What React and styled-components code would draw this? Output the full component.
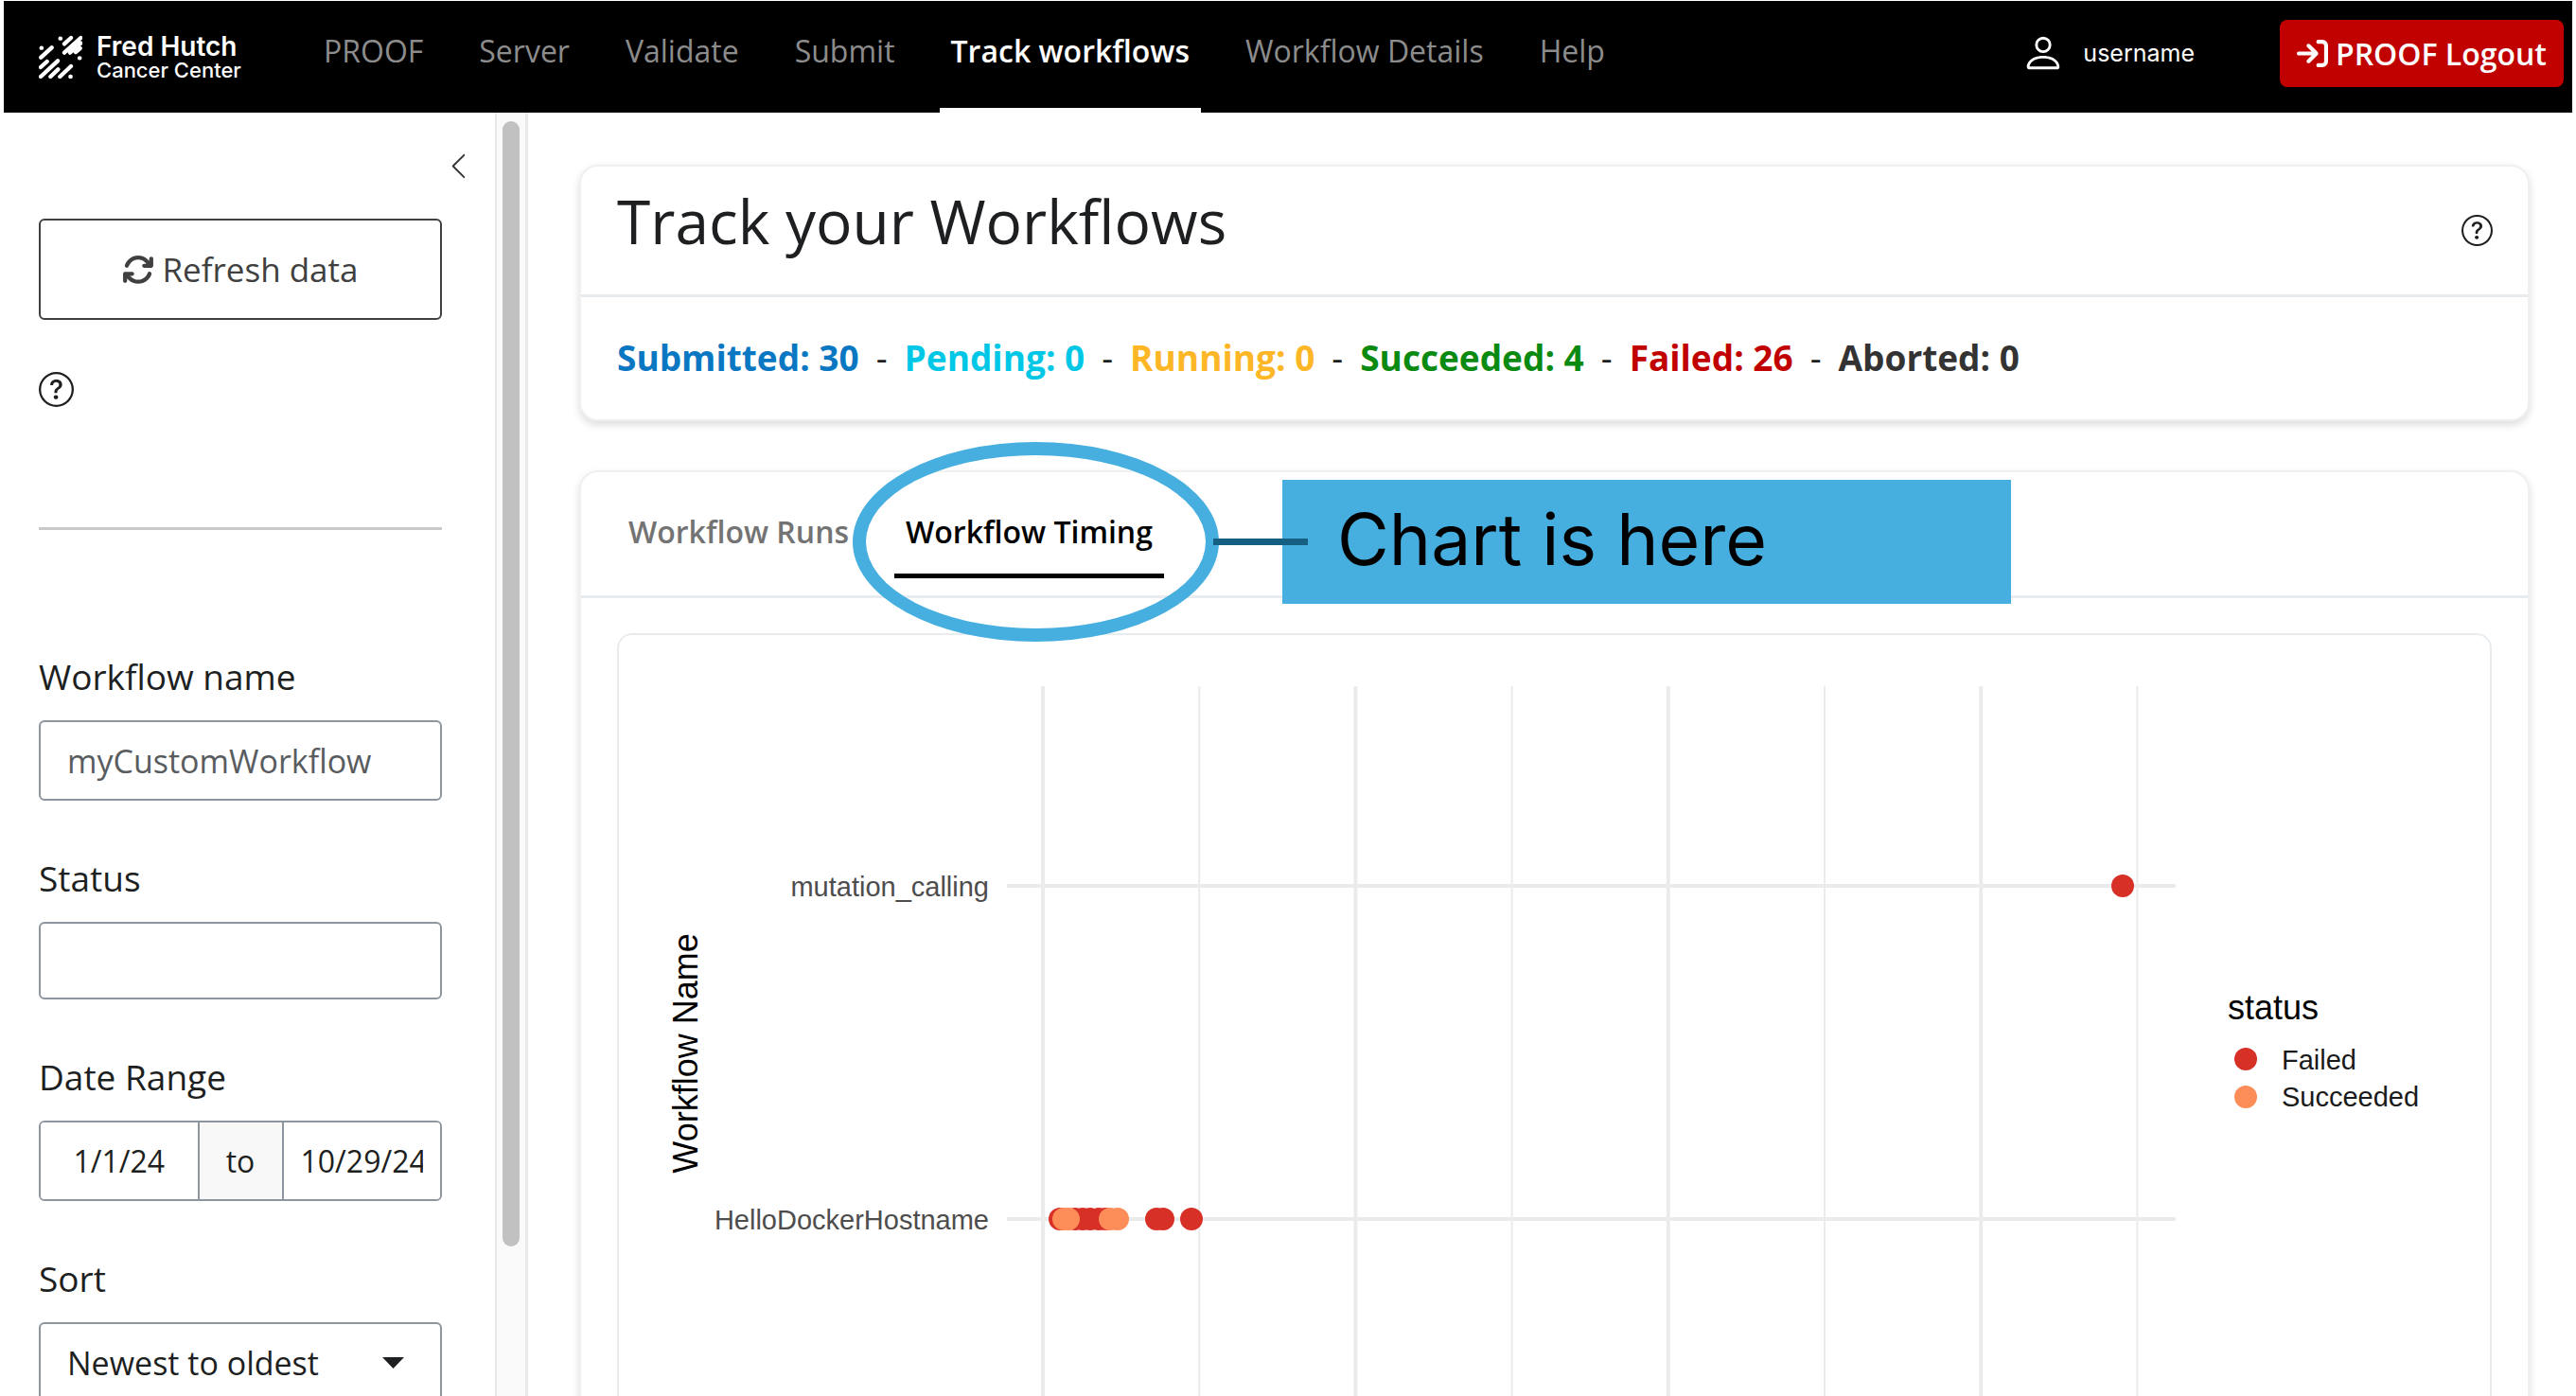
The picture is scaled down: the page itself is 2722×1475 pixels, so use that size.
import React from "react";
import styled, { createGlobalStyle, css } from "styled-components";
import { FaArrowRightToBracket, FaArrowsRotate } from "react-icons/fa6";
import { BsPerson, BsQuestionCircle, BsChevronLeft } from "react-icons/bs";

const sans = `"Open Sans", "Noto Sans", sans-serif`;
const display = `Inter, "Liberation Sans", sans-serif`;

const GlobalStyle = createGlobalStyle`
  *, *::before, *::after { box-sizing: border-box; }
  body {
    margin: 0;
    background: #fff;
    color: #1d1f21;
    font-family: ${sans};
  }
  button, input, select { font-family: inherit; margin: 0; }
`;

const Page = styled.div`
  display: flex;
  flex-direction: column;
  height: 100vh;
  padding: 1px 4px 0;
  overflow: hidden;
`;

const Navbar = styled.header`
  display: flex;
  flex: none;
  height: 118px;
  padding: 0 9px 0 37px;
  background: #000;
  color: #fff;
`;

const Brand = styled.a`
  display: flex;
  align-items: center;
  gap: 15px;
  width: 289px;
  color: #fff;
  text-decoration: none;
`;

const BrandText = styled.span`
  display: flex;
  flex-direction: column;
  font-family: ${display};
`;

const BrandName = styled.span`
  font-size: 28px;
  font-weight: 600;
  line-height: 27px;
`;

const BrandSub = styled.span`
  font-size: 22px;
  font-weight: 500;
  line-height: 22px;
`;

const NavLinks = styled.nav`
  display: flex;
  gap: 35px;
`;

const NavLink = styled.a`
  height: 118px;
  padding: 0 12px;
  border-bottom: 5px solid ${(p) => (p.$active ? "#fff" : "transparent")};
  color: ${(p) => (p.$active ? "#fff" : "#8c8c8c")};
  font-size: 32px;
  font-weight: ${(p) => (p.$active ? 600 : 400)};
  line-height: 106px;
  text-decoration: none;
  white-space: nowrap;
`;

const Account = styled.div`
  display: flex;
  align-items: center;
  height: 110px;
  margin-left: auto;
`;

const UserName = styled.span`
  margin: 0 90px 0 19px;
  font-family: ${display};
  font-size: 25px;
`;

const LogoutButton = styled.button`
  display: flex;
  align-items: center;
  justify-content: center;
  gap: 8px;
  height: 71px;
  padding: 0 18px;
  border: 0;
  border-radius: 8px;
  background: #c10000;
  color: #fff;
  font-size: 32px;
  font-weight: 600;
  white-space: nowrap;
`;

const Body = styled.div`
  display: flex;
  flex: 1;
  min-height: 0;
`;

const Sidebar = styled.aside`
  display: flex;
  flex: none;
  flex-direction: column;
  width: 519px;
  padding: 37px 56px 0 37px;
  overflow: hidden;
`;

const CollapseButton = styled.button`
  display: flex;
  align-self: flex-end;
  width: 40px;
  height: 40px;
  margin: 0 -38px 36px 0;
  padding: 4px;
  border: 0;
  background: none;
  color: #333;
`;

const RefreshButton = styled.button`
  display: flex;
  flex: none;
  align-items: center;
  justify-content: center;
  gap: 8px;
  height: 107px;
  border: 2px solid #404040;
  border-radius: 6px;
  background: #fff;
  color: #404040;
  font-size: 35px;
  font-weight: 500;
`;

const HelpButton = styled.button`
  display: flex;
  flex: none;
  align-self: ${(p) => (p.$inline ? "center" : "flex-start")};
  padding: 0;
  border: 0;
  background: none;
  color: #1d1f21;
`;

const HelpRow = styled.div`
  display: flex;
  padding: 55px 0 127px;
`;

const Divider = styled.hr`
  flex: none;
  width: 100%;
  height: 3px;
  margin: 0 0 127px;
  border: 0;
  background: #c9c9c9;
`;

const Field = styled.div`
  display: flex;
  flex: none;
  flex-direction: column;
  gap: 18px;
  margin-bottom: 54px;
`;

const FieldLabel = styled.label`
  font-size: 37px;
  line-height: 56px;
`;

const controlFrame = css`
  height: 85px;
  border: 2px solid #8d959e;
  border-radius: 6px;
  background: #fff;
  color: #1d1f21;
`;

const TextInput = styled.input`
  ${controlFrame}
  ${(p) => p.$compact && "height: 82px;"}
  width: 100%;
  padding: 0 28px;
  font-size: 34px;
  &::placeholder { color: #595c5f; opacity: 1; }
`;

const DateGroup = styled.div`
  ${controlFrame}
  display: flex;
  overflow: hidden;
`;

const DateInput = styled.input`
  flex: 1;
  min-width: 0;
  width: 0;
  padding: 0 18px;
  border: 0;
  background: #fff;
  color: #1d1f21;
  font-size: 32px;
  text-align: center;
`;

const DateJoin = styled.span`
  display: flex;
  align-items: center;
  justify-content: center;
  width: 91px;
  border: solid #8d959e;
  border-width: 0 2px;
  background: #f8f8f8;
  font-size: 32px;
`;

const SelectWrap = styled.div`
  display: grid;
  align-items: center;
  & > * { grid-area: 1 / 1; }
  & > svg { justify-self: end; margin-right: 40px; pointer-events: none; }
`;

const Select = styled.select`
  ${controlFrame}
  width: 100%;
  padding: 0 28px;
  appearance: none;
  font-size: 34px;
`;

const ScrollRail = styled.div`
  display: flex;
  flex: none;
  justify-content: center;
  width: 35px;
  padding-top: 9px;
  border: solid #e8e8e8;
  border-width: 0 3px 0 2px;
  background: #fafafa;
`;

const ScrollThumb = styled.div`
  width: 18px;
  height: calc(100% - 158px);
  border-radius: 9px;
  background: #c1c1c1;
`;

const Main = styled.main`
  display: flex;
  flex: 1;
  flex-direction: column;
  gap: 52px;
  min-width: 0;
  padding: 55px 45px 0 54px;
  overflow: hidden;
`;

const Card = styled.section`
  flex: none;
  border: 2px solid #f0f0f0;
  border-radius: 20px;
  background: #fff;
  box-shadow: 0 4px 8px rgba(0, 0, 0, 0.14);
`;

const CardHeader = styled.div`
  display: flex;
  align-items: center;
  justify-content: space-between;
  height: 138px;
  padding: 0 37px 0 38px;
  border-bottom: 3px solid #e9ecef;
`;

const Title = styled.h1`
  margin: 0 0 20px;
  font-size: 64px;
  font-weight: 400;
  line-height: 72px;
`;

const Counts = styled.div`
  display: flex;
  align-items: center;
  gap: 18px;
  height: 129px;
  padding: 0 38px 3px;
  font-size: 37px;
  white-space: nowrap;
`;

const Count = styled.strong`
  color: ${(p) => p.$color};
  font-weight: 700;
`;

const TabBar = styled.div`
  display: flex;
  gap: 36px;
  padding: 39px 38px 18px;
  border-bottom: 3px solid #e9ecef;
`;

const TabSlot = styled.div`
  position: relative;
`;

const Tab = styled.button`
  padding: 0 12px 20px;
  border: 0;
  border-bottom: 5px solid ${(p) => (p.$active ? "#000" : "transparent")};
  background: none;
  color: ${(p) => (p.$active ? "#000" : "#737373")};
  font-size: 32px;
  font-weight: 600;
  line-height: 48px;
  white-space: nowrap;
`;

const Annotation = styled.div`
  position: absolute;
  top: -71px;
  left: -44px;
  z-index: 1;
  display: flex;
  align-items: center;
  gap: 67px;
  pointer-events: none;
`;

const Ring = styled.div`
  flex: none;
  width: 387px;
  height: 211px;
  border: 14px solid #46afe0;
  border-radius: 50%;
`;

const Connector = styled.div`
  position: absolute;
  top: 102px;
  left: 381px;
  width: 100px;
  height: 7px;
  background: #156082;
`;

const Callout = styled.div`
  display: flex;
  align-items: center;
  flex: none;
  width: 770px;
  height: 131px;
  padding: 0 58px 6px;
  background: #46afe0;
  color: #000;
  font-family: ${display};
  font-size: 75px;
  white-space: nowrap;
`;

const CardBody = styled.div`
  padding: 37px 38px;
`;

const ChartPanel = styled.div`
  border: 2px solid #e9ecef;
  border-radius: 16px;
`;

const ChartSvg = styled.svg`
  display: block;
  width: 100%;
  font-family: "Liberation Sans", Arial, sans-serif;
`;

const navItems = ["PROOF", "Server", "Validate", "Submit", "Track workflows", "Workflow Details", "Help"];

const counts = [
  { label: "Submitted", value: 30, color: "#0a77c2" },
  { label: "Pending", value: 0, color: "#00c7e6" },
  { label: "Running", value: 0, color: "#fdb726" },
  { label: "Succeeded", value: 4, color: "#0b8a12" },
  { label: "Failed", value: 26, color: "#c10000" },
  { label: "Aborted", value: 0, color: "#333333" },
];

const failedColor = "#d73027";
const succeededColor = "#fc8d59";

const ROW = { mutation_calling: 265, HelloDockerHostname: 617 };
const tickX = (i) => 448 + (i * 826) / 5;

const points = [
  { x: 466, row: "HelloDockerHostname", status: "Failed" },
  { x: 482, row: "HelloDockerHostname", status: "Failed" },
  { x: 490, row: "HelloDockerHostname", status: "Failed" },
  { x: 498, row: "HelloDockerHostname", status: "Failed" },
  { x: 507, row: "HelloDockerHostname", status: "Failed" },
  { x: 514, row: "HelloDockerHostname", status: "Failed" },
  { x: 470, row: "HelloDockerHostname", status: "Succeeded" },
  { x: 475, row: "HelloDockerHostname", status: "Succeeded" },
  { x: 519, row: "HelloDockerHostname", status: "Succeeded" },
  { x: 527, row: "HelloDockerHostname", status: "Succeeded" },
  { x: 568, row: "HelloDockerHostname", status: "Failed" },
  { x: 575, row: "HelloDockerHostname", status: "Failed" },
  { x: 605, row: "HelloDockerHostname", status: "Failed" },
  { x: 1589, row: "mutation_calling", status: "Failed" },
];

function Logo() {
  return (
    <svg width="46" height="46" viewBox="20 25 138 138" fill="none" stroke="#fff" strokeWidth="13" strokeLinecap="round" aria-hidden="true">
      <path d="M88 36h1M101 53l21-19M101 81l52-47M119 81l34-30M137 79l14-12M149 98h1" />
      <path d="M28 66h1M27 96l34-31" />
      <path d="M26 127l20-18M26 157l54-50M57 157l24-23M87 157l35-33M120 157h1" />
    </svg>
  );
}

function TimingChart() {
  return (
    <ChartSvg viewBox="0 0 1977 900" role="img" aria-label="Workflow timing by workflow name">
      {Array.from({ length: 8 }, (_, i) => (
        <line key={i} x1={tickX(i)} x2={tickX(i)} y1="54" y2="880" stroke="#ebebeb" strokeWidth={i % 2 ? 2 : 4} />
      ))}
      {Object.entries(ROW).map(([name, y]) => (
        <g key={name}>
          <line x1="410" x2="1645" y1={y} y2={y} stroke="#ebebeb" strokeWidth="4" />
          <text x="391" y={y + 11} textAnchor="end" fontSize="29" fill="#4d4d4d">{name}</text>
        </g>
      ))}
      {points.map((p) => (
        <circle key={`${p.row}-${p.x}`} cx={p.x} cy={ROW[p.row]} r="12" fill={p.status === "Failed" ? failedColor : succeededColor} />
      ))}
      <text transform="translate(83 442) rotate(-90)" textAnchor="middle" fontSize="36" fill="#000">Workflow Name</text>
      <text x="1700" y="406" fontSize="36" fill="#000">status</text>
      <circle cx="1719" cy="448" r="12" fill={failedColor} />
      <text x="1757" y="459" fontSize="29" fill="#1a1a1a">Failed</text>
      <circle cx="1719" cy="488" r="12" fill={succeededColor} />
      <text x="1757" y="498" fontSize="29" fill="#1a1a1a">Succeeded</text>
    </ChartSvg>
  );
}

export default function App() {
  return (
    <Page>
      <GlobalStyle />
      <Navbar>
        <Brand href="#home">
          <Logo />
          <BrandText>
            <BrandName>Fred Hutch</BrandName>
            <BrandSub>Cancer Center</BrandSub>
          </BrandText>
        </Brand>
        <NavLinks>
          {navItems.map((item) => (
            <NavLink key={item} href={`#${item}`} $active={item === "Track workflows"}>{item}</NavLink>
          ))}
        </NavLinks>
        <Account>
          <BsPerson size={46} />
          <UserName>username</UserName>
          <LogoutButton type="button">
            <FaArrowRightToBracket size={33} />
            PROOF Logout
          </LogoutButton>
        </Account>
      </Navbar>
      <Body>
        <Sidebar>
          <CollapseButton type="button" aria-label="Collapse sidebar">
            <BsChevronLeft size={31} />
          </CollapseButton>
          <RefreshButton type="button">
            <FaArrowsRotate size={34} />
            Refresh data
          </RefreshButton>
          <HelpRow>
            <HelpButton type="button" aria-label="Refresh help">
              <BsQuestionCircle size={37} />
            </HelpButton>
          </HelpRow>
          <Divider />
          <Field>
            <FieldLabel htmlFor="workflow-name">Workflow name</FieldLabel>
            <TextInput id="workflow-name" type="text" placeholder="myCustomWorkflow" />
          </Field>
          <Field>
            <FieldLabel htmlFor="status">Status</FieldLabel>
            <TextInput id="status" type="text" $compact />
          </Field>
          <Field>
            <FieldLabel htmlFor="date-from">Date Range</FieldLabel>
            <DateGroup>
              <DateInput id="date-from" type="text" defaultValue="1/1/24" />
              <DateJoin>to</DateJoin>
              <DateInput type="text" aria-label="Date range end" defaultValue="10/29/24" />
            </DateGroup>
          </Field>
          <Field>
            <FieldLabel htmlFor="sort">Sort</FieldLabel>
            <SelectWrap>
              <Select id="sort" defaultValue="newest">
                <option value="newest">Newest to oldest</option>
                <option value="oldest">Oldest to newest</option>
              </Select>
              <svg width="23" height="12" viewBox="0 0 23 12" aria-hidden="true">
                <path d="M0 0h23L11.500 12z" fill="#1d1f21" />
              </svg>
            </SelectWrap>
          </Field>
        </Sidebar>
        <ScrollRail>
          <ScrollThumb />
        </ScrollRail>
        <Main>
          <Card>
            <CardHeader>
              <Title>Track your Workflows</Title>
              <HelpButton type="button" aria-label="Workflow help" $inline>
                <BsQuestionCircle size={33} />
              </HelpButton>
            </CardHeader>
            <Counts>
              {counts.map((c, i) => (
                <React.Fragment key={c.label}>
                  {i > 0 && <span>-</span>}
                  <Count $color={c.color}>{c.label}: {c.value}</Count>
                </React.Fragment>
              ))}
            </Counts>
          </Card>
          <Card>
            <TabBar role="tablist">
              <Tab type="button" role="tab" aria-selected="false">Workflow Runs</Tab>
              <TabSlot>
                <Tab type="button" role="tab" aria-selected="true" $active>Workflow Timing</Tab>
                <Annotation>
                  <Ring />
                  <Callout>Chart is here</Callout>
                  <Connector />
                </Annotation>
              </TabSlot>
            </TabBar>
            <CardBody>
              <ChartPanel>
                <TimingChart />
              </ChartPanel>
            </CardBody>
          </Card>
        </Main>
      </Body>
    </Page>
  );
}
